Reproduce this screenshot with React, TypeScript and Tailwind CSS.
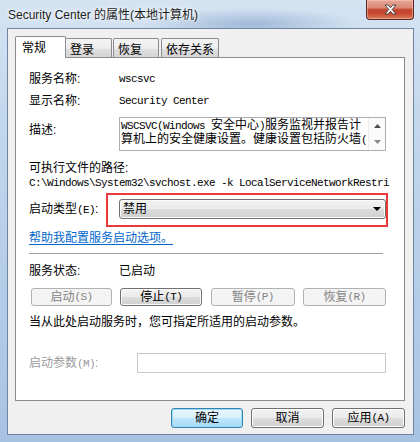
import React from "react";

const ui = "font-['Liberation_Sans','Noto_Sans_CJK_SC',sans-serif]";
const mono = "font-['Liberation_Mono','Noto_Sans_CJK_SC',monospace] text-[11px] tracking-[-0.6px]";

const btnNormal =
  "border border-[#707070] bg-[linear-gradient(180deg,#f2f2f2_0%,#ebebeb_50%,#dddddd_50%,#cfcfcf_100%)] shadow-[inset_0_0_0_1px_#fcfcfc] text-black";
const btnDisabled = "border border-[#adb2b5] bg-[#f4f4f4] text-[#838383]";
const btnDefault =
  "border border-[#3c7fb1] bg-[linear-gradient(180deg,#eaf6fd_0%,#d9f0fc_50%,#bee6fd_50%,#a7d9f5_100%)] shadow-[inset_0_0_0_1px_#94ddf7] text-black";

type Kind = "normal" | "disabled" | "default";

function Button({ label, hotkey, kind = "normal", className = "" }: { label: string; hotkey?: string; kind?: Kind; className?: string }) {
  const look = kind === "disabled" ? btnDisabled : kind === "default" ? btnDefault : btnNormal;
  return (
    <div className={`${look} ${className} flex items-center justify-center rounded-[3px] text-[12px] leading-none`}>
      <span>{label}</span>
      {hotkey && <span className={mono}>({hotkey})</span>}
    </div>
  );
}

function Tab({ label, active, className = "" }: { label: string; active?: boolean; className?: string }) {
  if (active) {
    return (
      <div className={`relative z-10 flex h-[22px] items-center rounded-t-[2px] border border-b-0 border-[#898c95] bg-white pl-[6px] ${className}`}>
        {label}
      </div>
    );
  }
  return (
    <div
      className={`flex h-[20px] items-center rounded-t-[2px] border border-b-0 border-[#898c95] bg-[linear-gradient(180deg,#f4f4f4_0%,#ececec_50%,#e0e0e0_50%,#d4d4d4_100%)] pl-[4px] pt-[2px] ${className}`}
    >
      {label}
    </div>
  );
}

export default function App() {
  return (
    <div
      className={`${ui} flex h-[442px] w-[420px] flex-col overflow-hidden bg-[linear-gradient(180deg,#d5e4f3_0%,#c4d8ed_25%,#b6cee8_60%,#a8c3e2_100%)] text-[12px] text-black`}
    >
      {/* title bar */}
      <div className="flex h-[28px] items-start justify-between bg-[radial-gradient(ellipse_110px_16px_at_250px_24px,rgba(70,110,165,0.35),transparent)] pl-[8px] pr-[6px]">
        <div className="self-center pt-[2px] text-[12px] text-[#1b1b1b] [text-shadow:0_0_6px_#fff,0_0_3px_#fff]">
          Security Center 的属性(本地计算机)
        </div>
        <div className="flex h-[20px] w-[48px] items-center justify-center rounded-b-[4px] border border-t-0 border-[#5a2720] bg-[linear-gradient(180deg,#e9a897_0%,#da8a76_40%,#c3442c_52%,#c8492f_72%,#dc7c5f_100%)] shadow-[inset_0_0_0_1px_rgba(255,200,190,0.5)]">
          <svg width="13" height="11" viewBox="0 0 13 11">
            <path
              d="M1 1h3.2L6.5 3.8 8.8 1H12L8.2 5.5 12 10H8.8L6.5 7.2 4.2 10H1l3.8-4.5z"
              fill="#fff"
              stroke="#3b3b3b"
              strokeWidth="0.9"
              strokeLinejoin="round"
            />
          </svg>
        </div>
      </div>

      {/* client area */}
      <div className="mx-[7px] mr-[6px] mb-[7px] flex flex-1 flex-col border border-[#6f86a3] bg-[#f0f0f0] pl-[7px] pr-[8px] pt-[7px]">
        <div className="flex h-[22px] items-end">
          <Tab label="常规" active className="w-[51px]" />
          <Tab label="登录" className="-ml-px w-[47px]" />
          <Tab label="恢复" className="ml-[1px] w-[46px]" />
          <Tab label="依存关系" className="ml-[2px] w-[58px]" />
        </div>

        <div className="-mt-px flex h-[344px] flex-col border border-[#898c95] bg-white pl-[13px] pr-[18px] pt-[12px]">
          <div className="flex h-[18px] items-center">
            <div className="w-[90px]">服务名称:</div>
            <div className={mono}>wscsvc</div>
          </div>
          <div className="mt-[4px] flex h-[18px] items-center">
            <div className="w-[90px]">显示名称:</div>
            <div className={mono}>Security Center</div>
          </div>

          <div className="mt-[7px] flex h-[34px]">
            <div className="w-[90px] pt-[4px] leading-[18px]">描述:</div>
            <div className="flex w-[267px] border border-[#abadb3] bg-white">
              <div className="flex-1 overflow-hidden whitespace-nowrap pl-px pt-px leading-[13px]">
                <div>
                  <span className={mono}>WSCSVC(Windows </span>安全中心<span className={mono}>)</span>服务监视并报告计
                </div>
                <div>
                  算机上的安全健康设置。健康设置包括防火墙<span className={mono}>(</span>
                </div>
              </div>
              <div className="flex w-[17px] flex-col border-l border-[#ececec] bg-[#fafafa]">
                <div className="flex h-1/2 items-center justify-center">
                  <svg width="7" height="4" viewBox="0 0 7 4">
                    <path d="M0 4L3.5 0 7 4z" fill="#4d4d4d" />
                  </svg>
                </div>
                <div className="flex h-1/2 items-center justify-center">
                  <svg width="7" height="4" viewBox="0 0 7 4">
                    <path d="M0 0h7L3.5 4z" fill="#8a8a8a" />
                  </svg>
                </div>
              </div>
            </div>
          </div>

          <div className="mt-[8px] h-[18px] leading-[18px]">可执行文件的路径:</div>
          <div className={`h-[13px] whitespace-nowrap leading-[13px] ${mono}`}>
            C:\Windows\System32\svchost.exe -k LocalServiceNetworkRestri
          </div>

          <div className="mt-[9px] flex h-[20px] items-center">
            <div className="w-[90px]">
              启动类型<span className={mono}>(E)</span>:
            </div>
            <div className="relative h-[20px] w-[267px]">
              <div className={`${btnNormal} flex h-full items-center justify-between rounded-[3px] pl-[3px] pr-[4px]`}>
                <span>禁用</span>
                <svg width="8" height="4" viewBox="0 0 8 4">
                  <path d="M0 0h8L4 4z" fill="#000" />
                </svg>
              </div>
              <div className="pointer-events-none absolute left-[-13px] top-[-6px] h-[34px] w-[282px] border-2 border-[#e83a3a]" />
            </div>
          </div>

          <div className="mt-[10px] h-[18px] w-fit leading-[18px] text-[#0066cc] underline underline-offset-2">
            帮助我配置服务启动选项。
          </div>

          <div className="mt-[6px] h-px w-[354px] bg-[#a0a0a0]" />

          <div className="mt-[8px] flex h-[18px] items-center">
            <div className="w-[90px]">服务状态:</div>
            <div>已启动</div>
          </div>

          <div className="mt-[8px] flex h-[18px] justify-between pl-[2px]">
            <Button label="启动" hotkey="S" kind="disabled" className="w-[81px]" />
            <Button label="停止" hotkey="T" className="w-[82px]" />
            <Button label="暂停" hotkey="P" kind="disabled" className="w-[84px]" />
            <Button label="恢复" hotkey="R" kind="disabled" className="w-[83px]" />
          </div>

          <div className="mt-[7px] h-[18px] leading-[18px]">当从此处启动服务时，您可指定所适用的启动参数。</div>

          <div className="mt-[22px] flex h-[20px] items-center">
            <div className="w-[108px] text-[#9a9a9a]">
              启动参数<span className={mono}>(M)</span>:
            </div>
            <div className="h-[20px] w-[249px] border border-[#c5c8cc] bg-white" />
          </div>
        </div>

        <div className="mt-[7px] flex justify-end gap-[8px]">
          <Button label="确定" kind="default" className="h-[20px] w-[72px]" />
          <Button label="取消" className="h-[20px] w-[73px]" />
          <Button label="应用" hotkey="A" className="h-[20px] w-[73px]" />
        </div>
      </div>
    </div>
  );
}
